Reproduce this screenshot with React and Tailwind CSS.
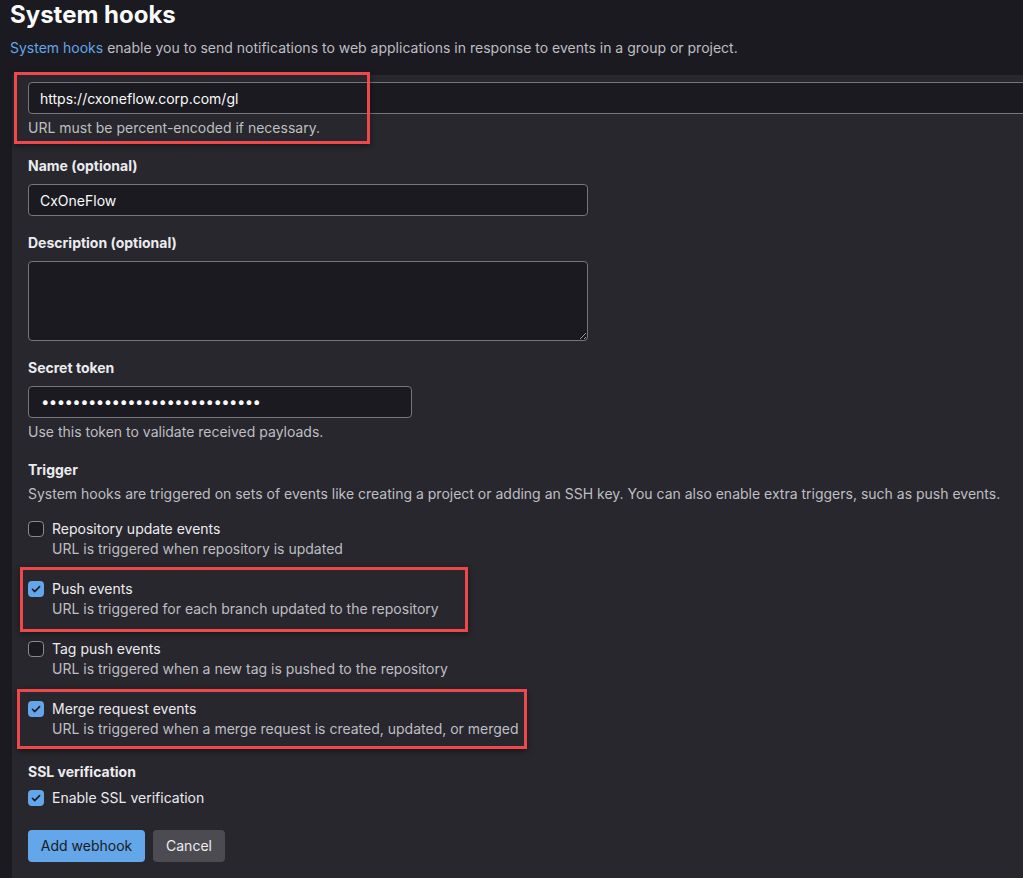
import React from "react";

function Check({ checked }) {
  return checked ? (
    <span className="mt-[2px] flex h-4 w-4 shrink-0 items-center justify-center rounded-[4px] bg-[#63a6e9]">
      <svg width="16" height="16" viewBox="0 0 16 16" fill="none">
        <path d="M4.4 8.3l2.3 2.3 4.9-5" stroke="#1b1a20" strokeWidth="1.6" strokeLinecap="round" strokeLinejoin="round" />
      </svg>
    </span>
  ) : (
    <span className="mt-[2px] block h-4 w-4 shrink-0 rounded-[4px] border border-[#89888d] bg-[#1b1a20]" />
  );
}

function CheckRow({ checked, label, desc }) {
  return (
    <div className="flex gap-2">
      <Check checked={checked} />
      <div>
        <div className="leading-5 text-[#ececef]">{label}</div>
        {desc && <div className="leading-5 text-[#bfbfc3]">{desc}</div>}
      </div>
    </div>
  );
}

function RedBox({ className }) {
  return (
    <div
      className={
        "pointer-events-none absolute border-[3px] border-[#f0474c] shadow-[0_2px_6px_rgba(0,0,0,0.45)] " +
        className
      }
    />
  );
}

export default function App() {
  return (
    <div className="h-[878px] w-[1023px] overflow-hidden bg-[#1b1a20] font-['Inter','Liberation_Sans',sans-serif] text-sm text-[#ececef]">
      <div className="pl-[10px]">
        <h1 className="text-[24px] font-bold leading-[30px] text-[#fafafa]">System hooks</h1>
        <p className="mt-2 leading-5 text-[#bfbfc3]">
          <span className="text-[#63a6e9]">System hooks</span> enable you to send notifications to web applications in response to events in a group or project.
        </p>
      </div>

      <div className="relative ml-3 mt-[17px] h-[820px] bg-[#28272d] pl-4 pt-[7px]">
        <input
          readOnly
          defaultValue="https://cxoneflow.corp.com/gl"
          className="block h-8 w-[1100px] rounded-[4px] border border-[#77767c] bg-[#1b1a20] pl-[11px] pr-3 text-sm text-[#fafafa] outline-none"
        />
        <div className="mt-1 leading-5 text-[#bfbfc3]">URL must be percent-encoded if necessary.</div>

        <div className="mt-[18px] font-bold leading-5">Name (optional)</div>
        <input
          readOnly
          defaultValue="CxOneFlow"
          className="mt-2 block h-8 w-[560px] rounded-[4px] border border-[#77767c] bg-[#1b1a20] pl-[11px] pr-3 text-sm text-[#fafafa] outline-none"
        />

        <div className="mt-[17px] font-bold leading-5">Description (optional)</div>
        <textarea
          readOnly
          className="mt-2 block h-20 w-[560px] rounded-[4px] border border-[#77767c] bg-[#1b1a20] px-3 text-sm text-[#fafafa] outline-none"
        />

        <div className="mt-[17px] font-bold leading-5">Secret token</div>
        <div className="mt-2 flex h-8 w-[384px] items-center rounded-[4px] border border-[#77767c] bg-[#1b1a20] px-3 text-[15px] tracking-[-0.6px] text-[#fafafa]">
          {"•".repeat(28)}
        </div>
        <div className="mt-1 leading-5 text-[#bfbfc3]">Use this token to validate received payloads.</div>

        <div className="mt-[18px] font-bold leading-5">Trigger</div>
        <div className="mt-1 leading-5 text-[#bfbfc3]">
          System hooks are triggered on sets of events like creating a project or adding an SSH key. You can also enable extra triggers, such as push events.
        </div>

        <div className="mt-[15px] flex flex-col gap-5">
          <CheckRow label="Repository update events" desc="URL is triggered when repository is updated" />
          <CheckRow checked label="Push events" desc="URL is triggered for each branch updated to the repository" />
          <CheckRow label="Tag push events" desc="URL is triggered when a new tag is pushed to the repository" />
          <CheckRow checked label="Merge request events" desc="URL is triggered when a merge request is created, updated, or merged" />
        </div>

        <div className="mt-[23px] font-bold leading-5">SSL verification</div>
        <div className="mt-[6px]">
          <CheckRow checked label="Enable SSL verification" />
        </div>

        <div className="mt-[22px] flex gap-2">
          <button className="h-8 w-[117px] rounded-[4px] bg-[#63a6e9] text-sm text-[#1b1a20]">Add webhook</button>
          <button className="h-8 w-[72px] rounded-[4px] bg-[#4c4b51] text-sm text-[#ececef]">Cancel</button>
        </div>

        <RedBox className="left-[2px] top-[-3px] h-[72px] w-[356px]" />
        <RedBox className="left-[8px] top-[492px] h-[65px] w-[448px]" />
        <RedBox className="left-[5px] top-[614px] h-[60px] w-[510px]" />
      </div>
    </div>
  );
}
